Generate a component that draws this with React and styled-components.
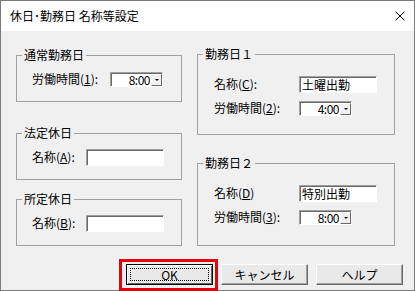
import styled, { createGlobalStyle } from "styled-components";

const Global = createGlobalStyle`
  html, body { margin: 0; padding: 0; background: #fff; }
  body {
    font-family: "Noto Sans CJK JP", "Noto Sans", sans-serif;
    font-size: 12px;
    color: #000;
  }
`;

export default function App() {
  return (
    <>
      <Global />
      <Window>
        <TitleBar>
          <Title>休日･勤務日 名称等設定</Title>
          <svg width="10" height="10" viewBox="0 0 10 10">
            <path d="M0.5 0.5 L9.5 9.5 M9.5 0.5 L0.5 9.5" stroke="#000" strokeWidth="1" fill="none" />
          </svg>
        </TitleBar>

        <Body>
          <Column $w={166}>
            <Group $mt={18}>
              <Legend>通常勤務日</Legend>
              <Content $pt={10} $pb={14} $pl={15}>
                <Row>
                  <Label $w={78}>労働時間(<u>1</u>):</Label>
                  <Combo value="8:00" />
                </Row>
              </Content>
            </Group>

            <Group $mt={25}>
              <Legend>法定休日</Legend>
              <Content $pt={10} $pb={14} $pl={15}>
                <Row>
                  <Label $w={54}>名称(<u>A</u>):</Label>
                  <TextBox readOnly defaultValue="" />
                </Row>
              </Content>
            </Group>

            <Group $mt={13}>
              <Legend>所定休日</Legend>
              <Content $pt={10} $pb={14} $pl={15}>
                <Row>
                  <Label $w={54}>名称(<u>B</u>):</Label>
                  <TextBox readOnly defaultValue="" />
                </Row>
              </Content>
            </Group>
          </Column>

          <Column $w={198}>
            <Group $mt={17}>
              <Legend>勤務日１</Legend>
              <Content $pt={16} $pb={18} $pl={16}>
                <Row>
                  <Label $w={85}>名称(<u>C</u>):</Label>
                  <TextBox readOnly defaultValue="土曜出勤" />
                </Row>
                <Row>
                  <Label $w={85}>労働時間(<u>2</u>):</Label>
                  <Combo value="4:00" />
                </Row>
              </Content>
            </Group>

            <Group $mt={22}>
              <Legend>勤務日２</Legend>
              <Content $pt={16} $pb={20} $pl={16}>
                <Row>
                  <Label $w={85}>名称(<u>D</u>)</Label>
                  <TextBox readOnly defaultValue="特別出勤" />
                </Row>
                <Row>
                  <Label $w={85}>労働時間(<u>3</u>):</Label>
                  <Combo value="8:00" />
                </Row>
              </Content>
            </Group>
          </Column>
        </Body>

        <Footer>
          <Marked>
            <Button $default>
              <FocusText>OK</FocusText>
            </Button>
            <Highlight />
          </Marked>
          <Button>キャンセル</Button>
          <Button>ヘルプ</Button>
        </Footer>
      </Window>
    </>
  );
}

function Combo({ value }) {
  return (
    <ComboBox>
      <ComboText>{value}</ComboText>
      <DropBtn>
        <Arrow />
      </DropBtn>
    </ComboBox>
  );
}

const Window = styled.div`
  width: 415px;
  height: 291px;
  box-sizing: border-box;
  border: 1px solid #7a7a7a;
  background: #f0f0f0;
  display: flex;
  flex-direction: column;
`;

const TitleBar = styled.div`
  height: 30px;
  flex: none;
  background: #fff;
  display: flex;
  align-items: center;
  justify-content: space-between;
  padding: 0 9px 0 9px;
`;

const Title = styled.span`
  font-size: 12px;
  line-height: 14px;
`;

const Body = styled.div`
  display: flex;
  gap: 15px;
  padding-left: 15px;
`;

const Column = styled.div`
  display: flex;
  flex-direction: column;
  width: ${(p) => p.$w}px;
`;

const Group = styled.fieldset`
  margin: ${(p) => p.$mt}px 0 0;
  padding: 0;
  min-width: 0;
  border: 1px solid #a0a0a0;
`;

const Legend = styled.legend`
  margin-left: 5px;
  padding: 0 2px;
  font-size: 12px;
  line-height: 12px;
  height: 12px;
`;

const Content = styled.div`
  display: flex;
  flex-direction: column;
  gap: 8px;
  padding: ${(p) => p.$pt}px 0 ${(p) => p.$pb}px ${(p) => p.$pl}px;
`;

const Row = styled.div`
  display: flex;
  align-items: center;
  height: 16px;
`;

const Label = styled.label`
  width: ${(p) => p.$w}px;
  flex: none;
  white-space: nowrap;
  font-size: 12px;
  line-height: 16px;

  u {
    text-underline-offset: 1px;
  }
`;

const TextBox = styled.input`
  width: 78px;
  height: 17px;
  box-sizing: border-box;
  margin: 0;
  padding: 0 2px;
  background: #fff;
  border: 1px solid;
  border-color: #a0a0a0 #fff #fff #a0a0a0;
  box-shadow: inset 1px 1px 0 #696969;
  font-family: inherit;
  font-size: 12px;
  line-height: 15px;
  color: #000;
  outline: none;
`;

const ComboBox = styled.div`
  width: 53px;
  height: 15px;
  box-sizing: border-box;
  display: flex;
  background: #fff;
  border: 1px solid;
  border-color: #a0a0a0 #fff #fff #a0a0a0;
  box-shadow: inset 1px 1px 0 #696969;
  padding: 1px 0 0 1px;
`;

const ComboText = styled.span`
  flex: 1;
  text-align: right;
  font-size: 12px;
  line-height: 12px;
  letter-spacing: -0.5px;
  padding-right: 1px;
`;

const DropBtn = styled.span`
  width: 11px;
  height: 12px;
  box-sizing: border-box;
  flex: none;
  background: #f0f0f0;
  border: 1px solid;
  border-color: #fff #696969 #696969 #fff;
  display: flex;
  align-items: center;
  justify-content: center;
`;

const Arrow = styled.span`
  width: 0;
  height: 0;
  border-left: 2px solid transparent;
  border-right: 2px solid transparent;
  border-top: 2px solid #000;
`;

const Footer = styled.div`
  display: flex;
  justify-content: flex-end;
  gap: 8px;
  padding: 18px 11px 0 0;
`;

const Marked = styled.div`
  position: relative;
  display: flex;
`;

const Button = styled.div`
  width: 87px;
  height: 21px;
  box-sizing: border-box;
  display: flex;
  align-items: center;
  justify-content: center;
  background: #e9e9e9;
  border: 1px solid;
  border-color: ${(p) => (p.$default ? "#000" : "#fff #696969 #696969 #fff")};
  box-shadow: ${(p) =>
    p.$default
      ? "inset 1px 1px 0 #fff, inset -1px -1px 0 #696969"
      : "inset -1px -1px 0 #a0a0a0"};
  font-size: 12px;
  line-height: 14px;
`;

const FocusText = styled.span`
  width: 79px;
  height: 13px;
  box-sizing: border-box;
  display: flex;
  align-items: center;
  justify-content: center;
  border: 1px dotted #000;
`;

const Highlight = styled.span`
  position: absolute;
  left: -7px;
  top: -5px;
  right: -5px;
  bottom: -6px;
  border: 3px solid #e8000b;
  pointer-events: none;
`;
